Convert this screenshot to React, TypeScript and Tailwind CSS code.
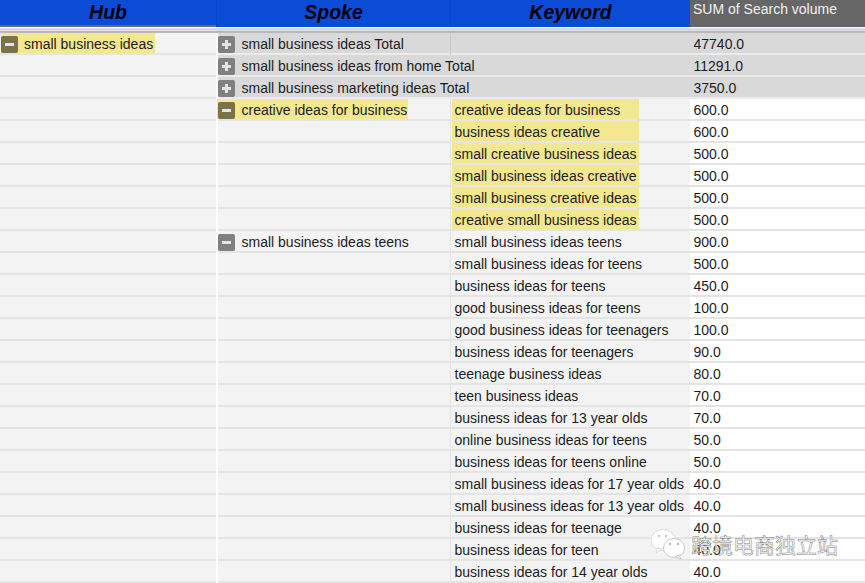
import type { ReactNode } from 'react'

type Row = {
  spoke?: string
  toggle?: 'plus' | 'minus'
  keyword?: string
  volume: string
  total?: boolean
  mark?: boolean
  markSpoke?: boolean
}

const rows: Row[] = [
  { spoke: 'small business ideas Total', toggle: 'plus', volume: '47740.0', total: true },
  { spoke: 'small business ideas from home Total', toggle: 'plus', volume: '11291.0', total: true },
  { spoke: 'small business marketing ideas Total', toggle: 'plus', volume: '3750.0', total: true },
  { spoke: 'creative ideas for business', toggle: 'minus', markSpoke: true, keyword: 'creative ideas for business', volume: '600.0', mark: true },
  { keyword: 'business ideas creative', volume: '600.0', mark: true },
  { keyword: 'small creative business ideas', volume: '500.0', mark: true },
  { keyword: 'small business ideas creative', volume: '500.0', mark: true },
  { keyword: 'small business creative ideas', volume: '500.0', mark: true },
  { keyword: 'creative small business ideas', volume: '500.0', mark: true },
  { spoke: 'small business ideas teens', toggle: 'minus', keyword: 'small business ideas teens', volume: '900.0' },
  { keyword: 'small business ideas for teens', volume: '500.0' },
  { keyword: 'business ideas for teens', volume: '450.0' },
  { keyword: 'good business ideas for teens', volume: '100.0' },
  { keyword: 'good business ideas for teenagers', volume: '100.0' },
  { keyword: 'business ideas for teenagers', volume: '90.0' },
  { keyword: 'teenage business ideas', volume: '80.0' },
  { keyword: 'teen business ideas', volume: '70.0' },
  { keyword: 'business ideas for 13 year olds', volume: '70.0' },
  { keyword: 'online business ideas for teens', volume: '50.0' },
  { keyword: 'business ideas for teens online', volume: '50.0' },
  { keyword: 'small business ideas for 17 year olds', volume: '40.0' },
  { keyword: 'small business ideas for 13 year olds', volume: '40.0' },
  { keyword: 'business ideas for teenage', volume: '40.0' },
  { keyword: 'business ideas for teen', volume: '40.0' },
  { keyword: 'business ideas for 14 year olds', volume: '40.0' },
]

function Toggle({ kind, dark }: { kind: 'plus' | 'minus'; dark?: boolean }) {
  return (
    <span className={`relative w-[17px] h-[17px] shrink-0 rounded-[2px] ${dark ? 'bg-[#7a7347]' : 'bg-[#808080]'}`}>
      <span className="absolute left-[4px] top-[7px] w-[9px] h-[3px] bg-[#e4e4e4]" />
      {kind === 'plus' && <span className="absolute left-[7px] top-[4px] w-[3px] h-[9px] bg-[#e4e4e4]" />}
    </span>
  )
}

function Marked({ children, className = '' }: { children: ReactNode; className?: string }) {
  return <span className={`self-start h-[20px] pt-[2px] flex items-center bg-[#f3e88f] ${className}`}>{children}</span>
}

function Header({ children, className }: { children: ReactNode; className: string }) {
  return (
    <div className={`h-[27px] flex items-center justify-center bg-[#0b4cd6] text-black text-[19.5px] leading-none font-bold italic ${className}`}>
      {children}
    </div>
  )
}

function WeChatIcon() {
  return (
    <svg width="36" height="32" viewBox="0 0 36 32" className="shrink-0">
      <ellipse cx="13" cy="12" rx="12" ry="10.5" fill="#fff" stroke="#d5d5d5" strokeWidth="0.8" />
      <path d="M7 20 L6 25 L12 21 Z" fill="#fff" stroke="#d5d5d5" strokeWidth="0.8" />
      <ellipse cx="24" cy="20" rx="10.5" ry="9.5" fill="#fff" stroke="#bdbdbd" strokeWidth="0.8" />
      <path d="M29 27 L31 31 L25 28.5 Z" fill="#fff" stroke="#bdbdbd" strokeWidth="0.8" />
      <circle cx="9" cy="8" r="1.2" fill="#c9c9c9" />
      <circle cx="16" cy="8" r="1.2" fill="#c9c9c9" />
      <circle cx="20" cy="16" r="1.2" fill="#b5b5b5" />
      <circle cx="28" cy="16" r="1.2" fill="#b5b5b5" />
    </svg>
  )
}

export default function App() {
  return (
    <div className="relative w-[865px] h-[583px] overflow-hidden bg-white text-[14px] leading-none text-[#1c1c1c] font-['Liberation_Sans',Arial,sans-serif]">
      {/* header */}
      <div className="flex h-[27px]">
        <Header className="w-[216px] border-b-2 border-[#6b6b6b]">Hub</Header>
        <Header className="w-[234px] border-l border-[#0a44c0] pb-[1px]">Spoke</Header>
        <Header className="w-[240px] border-l border-[#0a44c0] pb-[1px]">Keyword</Header>
        <div className="flex-1 bg-[#666666] text-[#f2f2f2] text-[14px] pl-[3px] pt-[2px]">SUM of Search volume</div>
      </div>
      <div className="h-[6px] bg-[#d6dae2] border-b-2 border-[#b9b9b9] border-t border-t-white" />

      {/* pivot rows */}
      <div className="flex">
        <div className="w-[216px] shrink-0 flex flex-col">
          {rows.map((r, i) => (
            <div key={i} className="h-[22px] flex items-center bg-[#f3f3f3] shadow-[inset_0_-2px_0_#e4e4e4] pl-[1px]">
              {i === 0 && (
                <Marked>
                  <span className="flex items-center gap-[6px] pr-[2px]">
                    <Toggle kind="minus" dark />
                    small business ideas
                  </span>
                </Marked>
              )}
            </div>
          ))}
        </div>
        <div className="w-[474px] shrink-0 flex flex-col">
          {rows.map((r, i) => (
            <div key={i} className={`h-[22px] flex ${r.total ? 'bg-[#d9d9d9] shadow-[inset_0_-2px_0_#ececec]' : 'bg-[#f3f3f3] shadow-[inset_0_-2px_0_#e4e4e4]'}`}>
              <div className={`border-l-2 border-white flex items-center ${r.total && i > 0 ? 'w-full' : 'w-[234px] shrink-0'} whitespace-nowrap`}>
                {r.spoke && r.toggle && (
                  r.markSpoke ? (
                    <Marked className="-ml-[1px] pl-[1px]">
                      <span className="flex items-center gap-[6.5px] pr-[0.5px]">
                        <Toggle kind={r.toggle} dark />
                        {r.spoke}
                      </span>
                    </Marked>
                  ) : (
                    <span className="flex items-center gap-[6.5px]">
                      <Toggle kind={r.toggle} />
                      {r.spoke}
                    </span>
                  )
                )}
              </div>
              {!(r.total && i > 0) && (
                <div className={`flex-1 border-l ${r.total ? 'border-[#c8c8c8]' : 'border-[#e4e4e4]'} flex items-center pl-[1px]`}>
                  {r.keyword &&
                    (r.mark ? (
                      <span className="self-start w-[187px] h-[20px] pt-[2px] flex items-center pl-[2.5px] bg-[#f3e88f] whitespace-nowrap">{r.keyword}</span>
                    ) : (
                      <span className="pl-[2.5px] whitespace-nowrap">{r.keyword}</span>
                    ))}
                </div>
              )}
            </div>
          ))}
        </div>
        <div className="flex-1 flex flex-col">
          {rows.map((r, i) => (
            <div key={i} className={`h-[22px] flex items-center pl-[3.5px] ${r.total ? 'bg-[#d9d9d9] shadow-[inset_0_-2px_0_#ececec]' : 'bg-white shadow-[inset_0_-2px_0_#e4e4e4]'}`}>
              {r.volume}
            </div>
          ))}
        </div>
      </div>

      {/* watermark */}
      <div className="absolute left-[650px] top-[528px] flex items-center gap-[5px]">
        <WeChatIcon />
        <span className="text-[21px] leading-none text-white whitespace-nowrap font-['Noto_Sans_CJK_SC',sans-serif] [-webkit-text-stroke:0.5px_#808080]">跨境电商独立站</span>
      </div>
    </div>
  )
}
